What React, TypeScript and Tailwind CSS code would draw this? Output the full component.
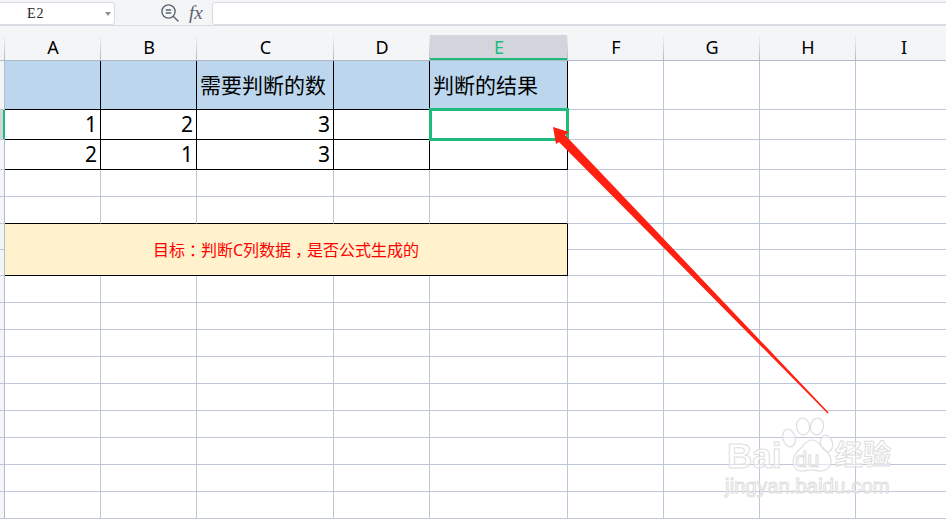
const COLUMNS = ['A', 'B', 'C', 'D', 'E', 'F', 'G', 'H', 'I']
const ROWS = Array.from({ length: 16 }, (_, i) => i)
const FONT = "font-['Noto_Sans','Noto_Sans_CJK_SC',sans-serif]"

// row 0 = header band, rows 1-2 = numbers, row 4 sits on top of the merged note
const VALUES: Record<string, string> = {
  '0-C': '需要判断的数',
  '0-E': '判断的结果',
  '1-A': '1',
  '1-B': '2',
  '1-C': '3',
  '2-A': '2',
  '2-B': '1',
  '2-C': '3',
}

function isTableCol(col: string) {
  return col === 'A' || col === 'B' || col === 'C' || col === 'D' || col === 'E'
}

function Cell({ row, col }: { row: number; col: string }) {
  const inTable = isTableCol(col)
  const blackRight = inTable && row <= 2
  const blackBottom = inTable && (row <= 2 || row === 4)
  const value = VALUES[`${row}-${col}`]

  return (
    <div
      className={`relative flex items-center text-[21px] leading-none text-black
        border-r border-b
        ${blackRight ? 'border-r-black' : 'border-r-[#c0c6da]'}
        ${blackBottom ? 'border-b-black' : 'border-b-[#c0c6da]'}
        ${row === 0 && inTable ? 'bg-[#bcd6ee]' : 'bg-white'}
        ${row === 0 ? 'justify-start pl-[3px]' : 'justify-end pr-[3px]'}`}
    >
      {value}
      {row === 1 && col === 'E' && (
        <div className="absolute -left-px -top-[2px] -right-[2px] -bottom-[2px] z-10 border-[3px] border-[#1fbb7c]" />
      )}
    </div>
  )
}

function ZoomIcon() {
  return (
    <svg width="20" height="20" viewBox="0 0 20 20" fill="none" stroke="#5a6372" strokeWidth="1.4">
      <circle cx="8.5" cy="8.5" r="6.6" />
      <path d="M5.8 7h5.4M5.8 10h5.4" />
      <path d="M13.2 13.2L18 18" strokeLinecap="round" />
    </svg>
  )
}

function Watermark() {
  const outline = "text-white/50 [-webkit-text-stroke:1px_#dedede] font-['Liberation_Sans','Noto_Sans_CJK_SC',sans-serif]"
  return (
    <div className="absolute left-[725px] top-[416px] z-20 h-[84px] w-[175px]">
      <svg className="absolute left-[57px] top-0" width="56" height="60" viewBox="0 0 56 60" fill="#ffffff" fillOpacity="0.5" stroke="#dedede" strokeWidth="1.2">
        <ellipse cx="7" cy="22" rx="6" ry="9" transform="rotate(-15 7 22)" />
        <ellipse cx="21" cy="10.5" rx="6.5" ry="8.5" transform="rotate(-8 21 10.5)" />
        <ellipse cx="35" cy="10.5" rx="6.5" ry="8.5" transform="rotate(10 35 10.5)" />
        <ellipse cx="44.5" cy="27.5" rx="6" ry="8.5" transform="rotate(-15 44.5 27.5)" />
        <path d="M30 24c6 0 8 5 12 9 5 4 7 7 7 12 0 7-5 10-11 10-4 0-6-1-9-1-3 0-5 1-9 1-6 0-9-4-9-9 0-6 3-9 7-13 4-3 5-9 12-9z" />
      </svg>
      <span className={`absolute left-[2px] top-[22px] text-[35px] font-bold leading-none ${outline}`}>Bai</span>
      <span className={`absolute left-[70px] top-[33px] text-[22px] leading-none ${outline}`}>du</span>
      <span className={`absolute left-[110px] top-[26px] text-[28px] font-bold leading-none ${outline}`}>经验</span>
      <span className={`absolute left-0 top-[60px] text-[20px] leading-none tracking-[0.2px] ${outline}`}>jingyan.baidu.com</span>
    </div>
  )
}

export default function App() {
  return (
    <div className={`relative h-[519px] w-[946px] overflow-hidden bg-white ${FONT}`}>
      {/* Name box + formula bar */}
      <div className="flex h-[26px] items-start border-b border-b-[#d8dbe1] bg-[#f4f5f7] pt-[2px]">
        <div className="-ml-px flex h-[23px] w-[116px] items-center rounded-r-[3px] border border-[#d8dbe1] bg-white">
          <span className="ml-[27px] flex-1 font-['Liberation_Serif',serif] text-[14px] tracking-[1px] text-[#222]">E2</span>
          <span className="mr-[3px] h-0 w-0 border-x-[3px] border-t-[4px] border-x-transparent border-t-[#8a8f98]" />
        </div>
        <div className="ml-[45px] mt-px flex items-center">
          <ZoomIcon />
          <span className="ml-[9px] font-['Liberation_Serif',serif] text-[19px] italic leading-5 text-[#5a6372]">fx</span>
        </div>
        <div className="-mr-px ml-[9px] h-[23px] flex-1 rounded-l-[3px] border border-[#d8dbe1] bg-white" />
      </div>

      {/* Column headers */}
      <div className="grid h-[35px] grid-cols-[5px_96px_96px_137px_96px_138px_96px_96px_96px_96px] border-b border-b-[#b1b9c9] bg-[#f4f5f7]">
        <div className="relative"><div className="absolute bottom-0 right-0 h-[26px] w-px bg-gradient-to-b from-[#f4f5f7] to-[#b1b9c9]" /></div>
        {COLUMNS.map((col) => (
          <div key={col} className="relative flex items-end justify-center pb-px">
            {col === 'E' && <div className="absolute inset-x-0 bottom-0 top-[9px] border-b-2 border-b-[#1fbb7c] bg-[#d2d5dc]" />}
            <span className={`relative text-[18px] leading-[24px] ${col === 'E' ? 'text-[#1fbb7c]' : 'text-black'}`}>{col}</span>
            <div className="absolute bottom-0 right-0 h-[26px] w-px bg-gradient-to-b from-[#f4f5f7] to-[#b1b9c9]" />
          </div>
        ))}
      </div>

      {/* Sheet */}
      <div className="grid grid-cols-[5px_96px_96px_137px_96px_138px_96px_96px_96px_96px] grid-rows-[49px_30px_30px_27px_27px_26px_26px_repeat(9,27px)]">
        {ROWS.map((row) => (
          <div key={row} className="contents">
            <div
              className={`relative border-r border-b border-r-[#b4bbd0] border-b-[#c0c6da] ${row === 1 ? 'bg-[#d2d5dc]' : 'bg-[#f4f5f7]'}`}
            >
              {row === 1 && <div className="absolute inset-y-0 -right-px w-[2px] bg-[#1fbb7c]" />}
            </div>
            {row === 5 && (
              <div className="col-span-5 row-span-2 flex items-center justify-center border-r border-b border-black bg-[#fff2cc] text-[16px] leading-none text-[#ff0000]">
                <span>目标</span>
                <span className="inline-block w-4 text-center [font-feature-settings:'halt']">：</span>
                <span>判断C列数据</span>
                <span className="inline-block w-4 text-center [font-feature-settings:'halt']">，</span>
                <span>是否公式生成的</span>
              </div>
            )}
            {COLUMNS.filter((col) => !(row >= 5 && row <= 6 && isTableCol(col))).map((col) => (
              <Cell key={col} row={row} col={col} />
            ))}
          </div>
        ))}
      </div>

      {/* Annotation arrow */}
      <svg className="absolute inset-0 z-20" width="946" height="519" viewBox="0 0 946 519">
        <polygon points="553,127 569,132 565,135 828.6,412.4 827.6,413.4 559,142 556,144" fill="#ff2012" />
      </svg>

      <Watermark />
    </div>
  )
}
